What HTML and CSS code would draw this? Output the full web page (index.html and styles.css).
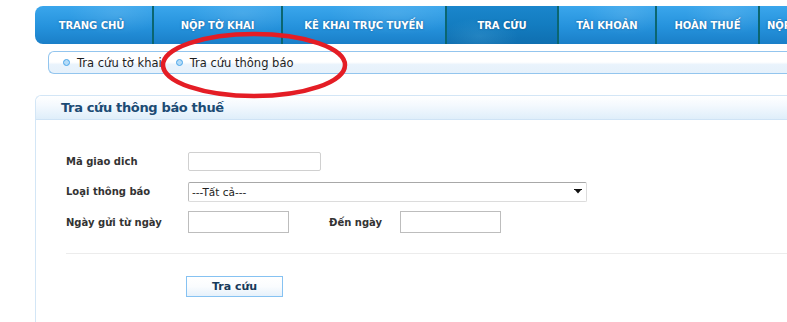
FILE: index.html
```html
<!DOCTYPE html>
<html lang="vi">
<head>
<meta charset="utf-8">
<title>Tra cứu thông báo thuế</title>
<link rel="stylesheet" href="styles.css">
</head>
<body>
<div class="page">
  <nav class="topnav">
    <a class="nav-item w1">TRANG CHỦ</a>
    <a class="nav-item w2">NỘP TỜ KHAI</a>
    <a class="nav-item w3">KÊ KHAI TRỰC TUYẾN</a>
    <a class="nav-item w4 active">TRA CỨU</a>
    <a class="nav-item w5">TÀI KHOẢN</a>
    <a class="nav-item w6">HOÀN THUẾ</a>
    <a class="nav-item w7">NỘP THUẾ</a>
  </nav>

  <div class="subnav">
    <a class="sub-item"><span class="dot"></span>Tra cứu tờ khai</a>
    <a class="sub-item"><span class="dot"></span>Tra cứu thông báo</a>
  </div>

  <section class="panel">
    <div class="panel-head"><h2>Tra cứu thông báo thuế</h2></div>
    <div class="panel-body">
      <div class="row r1">
        <label class="lbl">Mã giao dich</label>
        <input class="txt code" type="text">
      </div>
      <div class="row r2">
        <label class="lbl">Loại thông báo</label>
        <div class="select-wrap">
          <select class="sel"><option>---Tất cả---</option></select>
          <svg class="arrow" width="8" height="5" viewBox="0 0 8 5"><path d="M0 0H8V1H7L4 4.5L1 1H0Z" fill="#111"/></svg>
        </div>
      </div>
      <div class="row r3">
        <label class="lbl">Ngày gửi từ ngày</label>
        <input class="txt date" type="text">
        <label class="lbl2">Đến ngày</label>
        <input class="txt date" type="text">
      </div>
      <div class="sep"></div>
      <div class="actions">
        <button class="btn" type="button">Tra cứu</button>
      </div>
    </div>
  </section>

  <svg class="mark" width="200" height="72" viewBox="0 0 200 72">
    <ellipse cx="100" cy="36" rx="91" ry="31" fill="none" stroke="#e41d25" stroke-width="4.5"/>
  </svg>
</div>
</body>
</html>
```

FILE: styles.css
```css
* { box-sizing: border-box; }
html, body { margin: 0; padding: 0; background: #fff; }
body { font-family: "DejaVu Sans", Verdana, sans-serif; color: #333; }

.page {
  position: relative;
  width: 787px;
  height: 322px;
  overflow: hidden;
}

/* top navigation */
.topnav {
  display: flex;
  margin: 6px 0 0 35px;
  height: 38px;
  width: 900px;
  border-radius: 8px 0 0 8px;
  overflow: hidden;
  background: linear-gradient(to bottom, #3aa6ec 0%, #2592dc 55%, #1a7fc8 100%);
}
.nav-item {
  flex: none;
  display: flex;
  align-items: center;
  justify-content: center;
  height: 100%;
  color: #fff;
  font-weight: bold;
  font-size: 10px;
  letter-spacing: -0.05px;
  text-shadow: 0 0 2px rgba(0, 50, 100, 0.6);
  border-right: 2px solid #0b6670;
  background:
    radial-gradient(ellipse 60% 80% at 70% 20%, rgba(255,255,255,0.10), rgba(255,255,255,0) 70%);
}
.nav-item.active {
  background:
    radial-gradient(ellipse 50% 70% at 30% 80%, rgba(120,200,240,0.18), rgba(0,0,0,0) 70%),
    linear-gradient(to bottom, #1a86cc 0%, #137cc0 50%, #0f6fb0 100%);
}
.w1 { width: 119px; padding-right: 4px; }
.w2 { width: 129px; }
.w3 { width: 164px; }
.w4 { width: 112px; }
.w5 { width: 98px; }
.w6 { width: 103px; }
.w7 { width: 120px; justify-content: flex-start; padding-left: 7px; }

/* sub navigation */
.subnav {
  display: flex;
  align-items: center;
  margin: 7px 0 0 48px;
  height: 23px;
  width: 800px;
  border: 1px solid #93c5ee;
  border-right: none;
  border-radius: 6px 0 0 6px;
  background: linear-gradient(to bottom, #ffffff 0%, #ffffff 48%, #e9f3fc 60%, #e6f1fb 100%);
  padding-left: 14px;
}
.sub-item {
  display: flex;
  align-items: center;
  font-size: 11.5px;
  color: #1e1e1e;
  margin-right: 14px;
}
.sub-item .dot {
  width: 7px;
  height: 7px;
  border-radius: 50%;
  border: 1.5px solid #4aa6ea;
  background: #b5dcf8;
  margin-right: 7px;
}

/* panel */
.panel {
  margin: 21px 0 0 35px;
  width: 800px;
  height: 240px;
  border-left: 1px solid #d3e6f6;
  border-top: 1px solid #d3e6f6;
  border-radius: 6px 0 0 0;
}
.panel-head {
  height: 24px;
  border-bottom: 1px solid #cfe3f5;
  border-radius: 6px 0 0 0;
  background: linear-gradient(to bottom, #ffffff 0%, #f4f9fe 40%, #dfeefa 100%);
  padding-left: 25px;
  display: flex;
  align-items: center;
}
.panel-head h2 {
  margin: 0;
  font-size: 13px;
  font-weight: bold;
  letter-spacing: -0.35px;
  color: #1c4b74;
}

.panel-body { padding: 26px 0 0 30px; }
.row { display: flex; align-items: center; height: 30px; }
.row.r3 { height: 32px; }
.lbl {
  width: 122px;
  font-size: 10px;
  font-weight: bold;
  color: #333;
}
.lbl2 {
  width: 71px;
  margin-left: 40px;
  font-size: 10px;
  font-weight: bold;
  color: #333;
}
.txt {
  font-family: inherit;
  border: 1px solid #c8c8c8;
  padding: 0 3px;
  background: #fff;
  outline: none;
  margin: 0;
}
.txt.code { width: 133px; height: 19px; border-radius: 2px; border-color: #d0d0d0; }
.txt.date { width: 101px; height: 22px; border: 1px solid #bdbdbd; }

.select-wrap { position: relative; width: 399px; height: 20px; }
.sel {
  appearance: none;
  -webkit-appearance: none;
  width: 100%;
  height: 100%;
  margin: 0;
  font-family: inherit;
  font-size: 10.5px;
  color: #222;
  padding: 0 0 0 3px;
  background: #fff;
  border: 1px solid #dcdcdc;
  border-top-color: #a8a8a8;
  border-left-color: #bcbcbc;
  border-radius: 2px;
  outline: none;
}
.arrow { position: absolute; right: 5px; top: 8px; }

.sep {
  height: 1px;
  background: #ececec;
  margin: 15px 0 0 0;
}
.actions { padding: 21px 0 0 120px; }
.btn {
  width: 97px;
  height: 21px;
  margin: 0;
  padding: 0;
  font-family: inherit;
  font-size: 11px;
  font-weight: bold;
  color: #173a5a;
  border: 1px solid #86c2f2;
  background: linear-gradient(to bottom, #ffffff 0%, #fafcfe 50%, #e6f1fb 100%);
  cursor: pointer;
}

/* red hand-drawn highlight */
.mark {
  position: absolute;
  left: 154px;
  top: 29px;
  pointer-events: none;
}
```
